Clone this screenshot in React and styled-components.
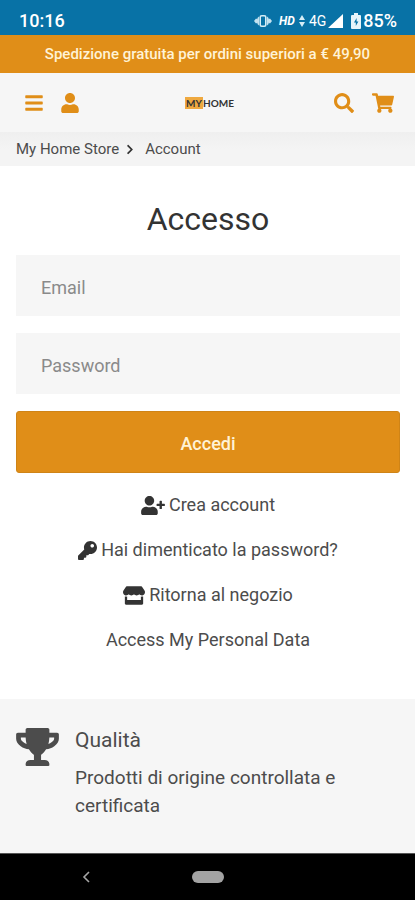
import React from "react";
import styled, { createGlobalStyle } from "styled-components";
import {
  FaBars,
  FaChevronRight,
  FaKey,
  FaSearch,
  FaShoppingCart,
  FaStore,
  FaTrophy,
  FaUser,
  FaUserPlus,
} from "react-icons/fa";

const Colours = {
  STATUS_BAR: "#0872a6",
  PRIMARY: "#e08e18",
  PANEL: "#f6f6f6",
  TEXT: "#4c4c4c",
  HEADING: "#333333",
  PLACEHOLDER: "#8a8a8a",
};

const links = [
  { text: "Crea account", icon: <FaUserPlus />, width: 24 },
  { text: "Hai dimenticato la password?", icon: <FaKey />, width: 19 },
  { text: "Ritorna al negozio", icon: <FaStore />, width: 22 },
  { text: "Access My Personal Data" },
];

const StatusIcons = () => (
  <StatusGroup>
    <svg width="18" height="14" viewBox="0 0 18 14" fill="#c3e2f0">
      <path d="M5 2.5v9L3.4 10V8.8L2 9.4 0 7l2-2.4 1.4.6V4zM13 2.5v9l1.6-1.5V8.8l1.4.6L18 7l-2-2.4-1.4.6V4z" />
      <rect
        x="6.2"
        y="1.7"
        width="5.6"
        height="10.6"
        rx="1.5"
        fill="none"
        stroke="#d5edf6"
        strokeWidth="1.6"
      />
    </svg>
    <Hd>HD</Hd>
    <svg width="6" height="12" viewBox="0 0 6 12" fill="#d5edf6">
      <path d="M3 0l3 5H0zM3 12L0 7h6z" />
    </svg>
    <Network>4G</Network>
    <svg width="15" height="14" viewBox="0 0 15 14" fill="#fff">
      <path d="M15 0v14H0z" />
    </svg>
    <Battery width="10" height="16" viewBox="0 0 10 16">
      <path
        d="M3 0h4v2h2q1 0 1 1v12q0 1-1 1H1q-1 0-1-1V3q0-1 1-1h2z"
        fill="#e8f5fa"
      />
      <path d="M5.6 5L3 9.4h1.8V13l2.6-4.6H5.6z" fill={Colours.STATUS_BAR} />
    </Battery>
    <span>85%</span>
  </StatusGroup>
);

const App = () => {
  return (
    <Page>
      <GlobalStyle />
      <StatusBar>
        <span>10:16</span>
        <StatusIcons />
      </StatusBar>
      <Announcement>
        Spedizione gratuita per ordini superiori a € 49,90
      </Announcement>
      <Header>
        <HeaderGroup>
          <IconButton aria-label="Menu" $width={18}>
            <FaBars />
          </IconButton>
          <IconButton aria-label="Account" $width={18}>
            <FaUser />
          </IconButton>
        </HeaderGroup>
        <Logo href="#">
          <span>MY</span>HOME
        </Logo>
        <HeaderGroup $end>
          <IconButton aria-label="Cerca" $width={20}>
            <FaSearch />
          </IconButton>
          <IconButton aria-label="Carrello" $width={22}>
            <FaShoppingCart />
          </IconButton>
        </HeaderGroup>
      </Header>
      <Breadcrumb>
        <a href="#">My Home Store</a>
        <FaChevronRight />
        <span>Account</span>
      </Breadcrumb>
      <Main>
        <Title>Accesso</Title>
        <Form onSubmit={(e) => e.preventDefault()}>
          <Input type="email" placeholder="Email" aria-label="Email" />
          <Input type="password" placeholder="Password" aria-label="Password" />
          <Submit type="submit">Accedi</Submit>
        </Form>
        <LinkList>
          {links.map((link) => (
            <li key={link.text}>
              <TextLink href="#" $iconWidth={link.width}>
                {link.icon}
                {link.text}
              </TextLink>
            </li>
          ))}
        </LinkList>
      </Main>
      <Feature>
        <FaTrophy />
        <div>
          <FeatureTitle>Qualità</FeatureTitle>
          <FeatureText>Prodotti di origine controllata e certificata</FeatureText>
        </div>
      </Feature>
      <SystemNav>
        <BackButton aria-label="Indietro">
          <svg width="8" height="12" viewBox="0 0 8 12" fill="none">
            <path d="M7 1L2 6l5 5" stroke="#a6a6a6" strokeWidth="1.6" />
          </svg>
        </BackButton>
        <HomeButton aria-label="Home" />
      </SystemNav>
    </Page>
  );
};

export default App;

const GlobalStyle = createGlobalStyle`
  * {
    box-sizing: border-box;
  }

  body {
    background: #ffffff;
    color: ${Colours.TEXT};
    font-family: "Roboto", "Noto Sans", sans-serif;
    margin: 0;
  }

  button, input {
    font-family: inherit;
  }

  a {
    color: inherit;
    text-decoration: none;
  }
`;

const Page = styled.div`
  display: flex;
  flex-direction: column;
  min-height: 100vh;
`;

const StatusBar = styled.div`
  align-items: center;
  background: ${Colours.STATUS_BAR};
  color: #ffffff;
  display: flex;
  font-size: 18px;
  font-weight: 500;
  height: 35px;
  justify-content: space-between;
  padding: 6px 18px 0 19px;
`;

const StatusGroup = styled.div`
  align-items: center;
  display: flex;
`;

const Hd = styled.span`
  font-size: 12px;
  font-style: italic;
  font-weight: 700;
  margin: 0 4px 0 7px;
`;

const Network = styled.span`
  font-size: 14px;
  font-weight: 400;
  margin: 0 2px 0 4px;
`;

const Battery = styled.svg`
  margin: 0 2px 0 8px;
`;

const Announcement = styled.div`
  background: ${Colours.PRIMARY};
  color: #fff3d6;
  font-size: 15px;
  font-weight: 500;
  line-height: 22px;
  padding: 8px 16px;
  text-align: center;
`;

const Header = styled.header`
  align-items: center;
  background: ${Colours.PANEL};
  display: grid;
  grid-template-columns: 1fr auto 1fr;
  height: 59px;
  padding: 0 21px 0 25px;
`;

const HeaderGroup = styled.div`
  display: flex;
  gap: 18px;
  justify-content: ${(props) => (props.$end ? "flex-end" : "flex-start")};
`;

const IconButton = styled.button`
  background: none;
  border: 0;
  color: ${Colours.PRIMARY};
  display: flex;
  padding: 0;

  svg {
    height: 20px;
    width: ${(props) => props.$width}px;
  }
`;

const Logo = styled.a`
  align-items: center;
  color: ${Colours.HEADING};
  display: flex;
  font-family: "Lato", sans-serif;
  font-size: 10px;
  font-weight: 700;
  line-height: 12px;

  span {
    background: #efa940;
    padding: 0 1px;
  }
`;

const Breadcrumb = styled.nav`
  align-items: center;
  background: linear-gradient(#efefef, #f4f4f4 50%);
  display: flex;
  font-size: 15px;
  height: 34px;
  padding: 0 16px;

  svg {
    color: ${Colours.HEADING};
    height: 11px;
    margin: 0 11px 0 7px;
    width: 8px;
  }
`;

const Main = styled.main`
  flex: 1;
  padding: 32px 15px 36px 16px;
`;

const Title = styled.h1`
  color: ${Colours.HEADING};
  font-size: 32px;
  font-weight: 400;
  line-height: 42px;
  margin: 0 0 15px;
  text-align: center;
`;

const Form = styled.form`
  display: flex;
  flex-direction: column;
  gap: 17px;
`;

const Input = styled.input`
  background: ${Colours.PANEL};
  border: 0;
  color: ${Colours.TEXT};
  font-size: 18px;
  height: 61px;
  padding: 3px 25px 0;
  width: 100%;

  &::placeholder {
    color: ${Colours.PLACEHOLDER};
  }
`;

const Submit = styled.button`
  background: ${Colours.PRIMARY};
  border: 1px solid #cf8417;
  border-radius: 3px;
  color: #fff3d6;
  font-size: 18px;
  font-weight: 500;
  height: 62px;
  padding: 3px 0 0;
`;

const LinkList = styled.ul`
  display: flex;
  flex-direction: column;
  gap: 17px;
  list-style: none;
  margin: 18px 0 0;
  padding: 0;
  text-align: center;
`;

const TextLink = styled.a`
  align-items: center;
  display: inline-flex;
  font-size: 18px;
  gap: 4px;
  line-height: 28px;
  vertical-align: top;

  svg {
    color: ${Colours.HEADING};
    height: 19px;
    width: ${(props) => props.$iconWidth}px;
  }
`;

const Feature = styled.section`
  background: ${Colours.PANEL};
  display: flex;
  gap: 16px;
  padding: 27px 16px 33px;

  svg {
    color: ${Colours.TEXT};
    flex: none;
    height: 38px;
    margin-top: 2px;
    width: 43px;
  }
`;

const FeatureTitle = styled.h2`
  font-size: 21px;
  font-weight: 400;
  line-height: 28px;
  margin: 0 0 10px;
`;

const FeatureText = styled.p`
  font-size: 19px;
  line-height: 28px;
  margin: 0;
`;

const SystemNav = styled.nav`
  align-items: center;
  background: #000000;
  border-top: 1px solid #555555;
  display: grid;
  grid-template-columns: 1fr auto 1fr;
  height: 47px;
`;

const BackButton = styled.button`
  background: none;
  border: 0;
  display: flex;
  justify-self: center;
  margin-right: 20px;
  padding: 0;
`;

const HomeButton = styled.button`
  background: #a3a3a3;
  border: 0;
  border-radius: 6px;
  height: 12px;
  padding: 0;
  width: 32px;
`;
